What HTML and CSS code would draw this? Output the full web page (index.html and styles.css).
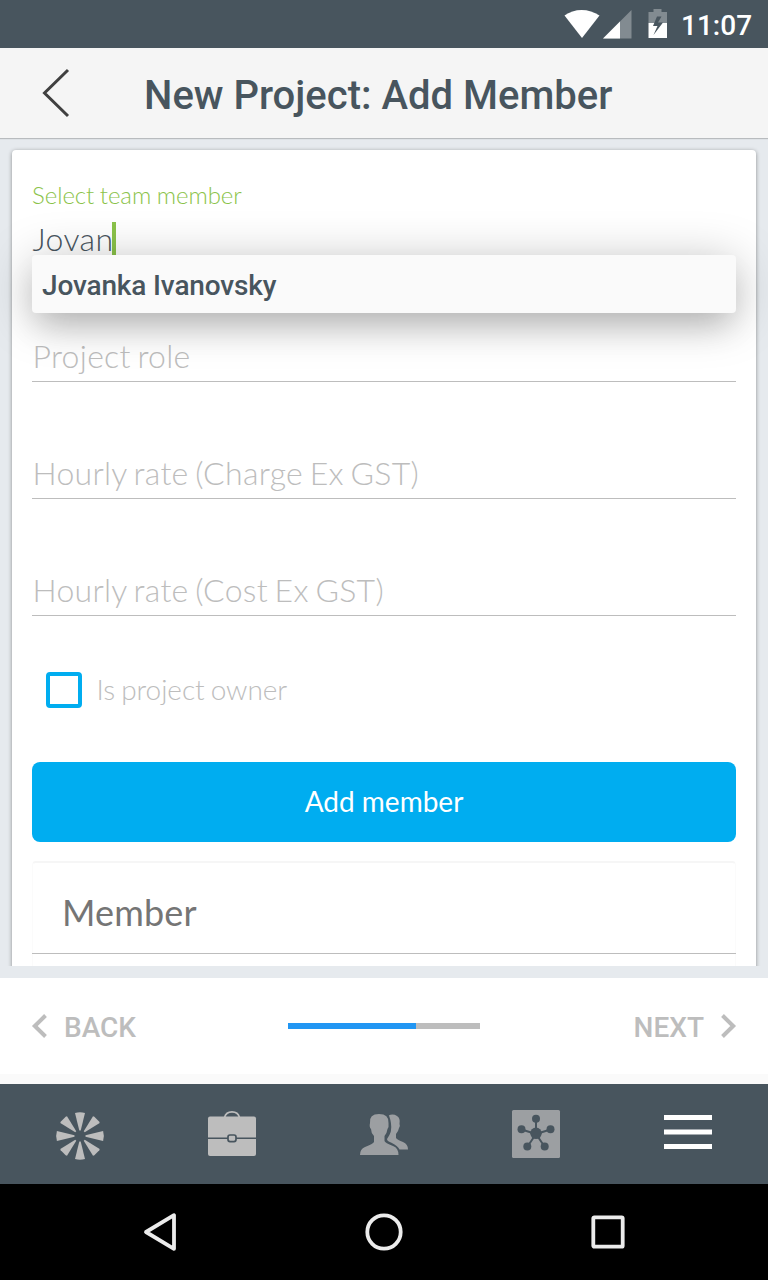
FILE: index.html
```html
<!DOCTYPE html>
<html lang="en">
<head>
<meta charset="utf-8">
<title>New Project: Add Member</title>
<link rel="stylesheet" href="styles.css">
</head>
<body>
<div class="status-bar">
  <svg width="72" height="48" viewBox="0 0 72 48">
    <path d="M.5 15.500C10 8 25 8 35.500 15.500L18 38Z" fill="#fff"/>
    <path d="M67.500 10V38.500H39Z" fill="#fff" fill-opacity=".32"/>
    <path d="M56 21.500V38.500H39Z" fill="#fff"/>
  </svg>
  <svg class="battery" width="20" height="48" viewBox="0 0 20 48">
    <path d="M0.500 12h5V9h8v3h5.500v11H.5Z" fill="#fff" fill-opacity=".32"/>
    <path d="M.5 23H19V38H.5Z" fill="#fff"/>
    <path d="M9 16.500L5 26h4.500L5.500 35L15 22.500h-5L13.500 16.500Z" fill="#48555e"/>
  </svg>
  <span class="clock">11:07</span>
</div>
<header class="header">
  <svg width="30" height="52" viewBox="0 0 30 52"><path d="M27 3L3.500 26L27 49" fill="none" stroke="#404040" stroke-width="3"/></svg>
  <h1 class="title">New Project: Add Member</h1>
</header>
<main class="content">
  <section class="card">
    <div class="field field-active">
      <label class="field-label">Select team member</label>
      <div class="field-input field-value"><span>Jovan</span><i class="caret"></i></div>
      <div class="suggestions">Jovanka Ivanovsky</div>
    </div>
    <div class="field"><div class="field-input">Project role</div></div>
    <div class="field"><div class="field-input">Hourly rate (Charge Ex GST)</div></div>
    <div class="field"><div class="field-input">Hourly rate (Cost Ex GST)</div></div>
    <div class="check-row"><span class="checkbox"></span><span class="check-label">Is project owner</span></div>
    <div class="button">Add member</div>
    <div class="table"><div class="table-head">Member</div></div>
  </section>
</main>
<div class="wizard">
  <div class="step step-back">
    <svg width="16" height="26" viewBox="0 0 16 26"><path d="M13.500 2.500L2.800 13L13.500 23.500" fill="none" stroke="#bdbdbd" stroke-width="4"/></svg>
    <span>BACK</span>
  </div>
  <div class="progress"><div class="progress-fill"></div></div>
  <div class="step step-next">
    <span>NEXT</span>
    <svg width="16" height="26" viewBox="0 0 16 26"><path d="M2.500 2.500L13.200 13L2.500 23.500" fill="none" stroke="#bdbdbd" stroke-width="4"/></svg>
  </div>
</div>
<nav class="tabs">
  <svg class="tab-low" width="48" height="48" viewBox="0 0 48 48" fill="#bdbdbd">
    <path id="blade" d="M23.300 18.500L19 .9Q24 -.6 29 .9L24.700 18.500Z"/>
    <path id="blade-diagonal" d="M23.300 18L19.300 .9L20.500 .2H27.500L28.700 .9L24.700 18Z" transform="rotate(45 24 24)"/>
    <use href="#blade" transform="rotate(90 24 24)"/><use href="#blade-diagonal" transform="rotate(90 24 24)"/>
    <use href="#blade" transform="rotate(180 24 24)"/><use href="#blade-diagonal" transform="rotate(180 24 24)"/>
    <use href="#blade" transform="rotate(270 24 24)"/><use href="#blade-diagonal" transform="rotate(270 24 24)"/>
  </svg>
  <svg class="tab-low" width="48" height="48" viewBox="0 0 48 48">
    <path d="M16.500 5.500Q18 -.2 24 -.2T31.500 5.500" fill="none" stroke="#bdbdbd" stroke-width="1.700"/>
    <rect y="4.500" width="48" height="39.500" rx="2" fill="#bdbdbd"/>
    <path d="M0 26.300H48" stroke="#48555e" stroke-width="1.500"/>
    <rect x="20" y="23" width="8" height="6.600" rx="2" fill="#bdbdbd" stroke="#48555e" stroke-width="1.700"/>
  </svg>
  <svg width="48" height="48" viewBox="0 0 48 48" fill="#9c9fa2">
    <path d="M28.500 5.500Q33 3.500 37 6Q40.500 8 39.500 14Q40.500 16 39 18Q38.500 21 36 24V28Q37.500 30 43 32Q48 34 48 39.500H39.500Q38 36 31 32.500Q27 31 27 29Q31 23 31 20Q32 14 29 5.500Z"/>
    <path d="M0 45Q0 39 5 37Q13 34 14 32V26Q11 23 11 19Q9 17 10 13Q9 4 19 4Q29 4 28.500 13Q29 17 27.500 19Q27 23 24.500 26V31Q25 33 33 36Q38.500 38 38.500 45Z" stroke="#48555e" stroke-width="1.600" paint-order="stroke"/>
  </svg>
  <svg width="48" height="48" viewBox="0 0 48 48">
    <rect width="48" height="48" rx="1.500" fill="#9c9fa2"/>
    <path d="M24 24V9M24 24L9.500 19.500M24 24L38.500 19.500M24 24L15.500 36.500M24 24L32.500 36.500" stroke="#48555e" stroke-width="2"/>
    <g fill="#48555e"><circle cx="24" cy="23.300" r="5.800"/><circle cx="24" cy="8.700" r="4"/><circle cx="9.500" cy="19.300" r="4"/><circle cx="38.500" cy="19.300" r="4"/><circle cx="15.300" cy="36.500" r="4"/><circle cx="32.700" cy="36.500" r="4"/></g>
  </svg>
  <svg width="48" height="48" viewBox="0 0 48 48"><path d="M0 7.500H48M0 22H48M0 36.500H48" stroke="#fff" stroke-width="4.800"/></svg>
</nav>
<div class="system-nav">
  <svg width="40" height="40" viewBox="0 0 40 40"><path d="M34 3.200V36.800L6 20Z" fill="none" stroke="#ececec" stroke-width="3.800" stroke-linejoin="round"/></svg>
  <svg width="40" height="40" viewBox="0 0 40 40"><circle cx="20" cy="20" r="16.700" fill="none" stroke="#ececec" stroke-width="3.800"/></svg>
  <svg width="40" height="40" viewBox="0 0 40 40"><rect x="5.300" y="5.300" width="29.400" height="29.400" rx="1" fill="none" stroke="#ececec" stroke-width="3.800"/></svg>
</div>
</body>
</html>
```
FILE: styles.css
```css
* { box-sizing: border-box; }
body { margin: 0; width: 768px; height: 1280px; overflow: hidden; display: flex; flex-direction: column; background: #e6eaee; font-family: Roboto, sans-serif; }
svg { display: block; flex: none; overflow: visible; }

.status-bar { height: 48px; flex: none; display: flex; align-items: center; justify-content: flex-end; padding-right: 16px; background: #48555e; }
.battery { margin-left: 12px; }
.clock { width: 71px; margin-left: 13px; font-size: 28px; line-height: 48px; font-weight: 500; color: #fff; white-space: nowrap; padding-top: 3px; }

.header { height: 90px; flex: none; display: flex; align-items: center; padding-left: 41px; background: #f5f5f5; box-shadow: 0 1px 1px rgba(0, 0, 0, .2); position: relative; z-index: 1; }
.title { margin: 6px 0 0 73px; font-size: 40px; line-height: 48px; font-weight: 500; color: #48555e; white-space: nowrap; }

.content { height: 828px; flex: none; padding: 12px 12px 0; overflow: hidden; font-family: Lato, sans-serif; }
.card { height: 840px; padding: 0 20px; border-radius: 4px; background: #fff; box-shadow: 0 1px 4px rgba(0, 0, 0, .4); }

.field { height: 117px; display: flex; flex-direction: column; justify-content: flex-end; font-weight: 300; }
.field-active { height: 115px; position: relative; }
.field-label { font-size: 24px; line-height: 30px; color: #8bc34a; margin-bottom: 5px; letter-spacing: -.05px; word-spacing: -1px; }
.field-input { height: 50px; flex: none; display: flex; padding-left: .5px; border-bottom: 1px solid #bdbdbd; font-size: 32px; line-height: 47px; letter-spacing: .28px; word-spacing: -2.300px; color: #bdbdbd; white-space: pre; }
.field-value { color: #48555e; letter-spacing: .4px; }
.caret { width: 4px; height: 36px; margin: 7px 0 0 -1.500px; background: #8bc34a; }
.suggestions { position: absolute; top: 105px; left: 0; right: 0; height: 58px; padding-left: 10px; border-radius: 4px; background: #fafafa; box-shadow: 0 6px 48px rgba(0, 0, 0, .25), 0 18px 32px -6px rgba(0, 0, 0, .15); font: 500 28px/62px Roboto, sans-serif; letter-spacing: -.15px; color: #48555e; }

.check-row { display: flex; align-items: center; height: 36px; margin: 56px 0 0 14px; }
.checkbox { width: 36px; height: 36px; border: 4px solid #00adf0; border-radius: 4px; }
.check-label { margin: -2px 0 0 14.500px; font-size: 28px; font-weight: 300; letter-spacing: -.05px; word-spacing: -1.500px; color: #bdbdbd; }
.button { height: 80px; margin-top: 54px; border-radius: 8px; background: #00adf0; color: #fff; font-size: 28px; line-height: 79px; text-align: center; }
.table { height: 130px; margin-top: 19px; border: 1px solid #fbfbfb; border-width: 2px 1px; border-top-color: #f6f6f6; border-radius: 4px; }
.table-head { height: 91px; margin: 0 -1px; padding-left: 30px; border-bottom: 1px solid #bdbdbd; font-size: 36px; line-height: 98px; letter-spacing: .15px; color: #757575; }

.wizard { height: 106px; flex: none; margin-top: 12px; padding: 0 32px; display: grid; grid-template-columns: 1fr 192px 1fr; align-items: center; background: #fff; border-bottom: 10px solid #fafafa; }
.step { display: flex; align-items: center; gap: 16px; font-size: 28px; font-weight: 500; line-height: 36px; color: #bdbdbd; }
.step span { margin-top: 4px; }
.step-next { justify-content: flex-end; }
.progress { height: 6px; background: #bdbdbd; }
.progress-fill { width: 128px; height: 6px; background: #2196f3; }

.tabs { height: 100px; flex: none; display: grid; grid-template-columns: repeat(5, 152px); justify-content: center; justify-items: center; align-items: start; padding: 26px 0; background: #48555e; }
.tab-low { margin-top: 2px; }
.system-nav { height: 96px; flex: none; display: grid; grid-template-columns: repeat(3, 224px); justify-content: center; justify-items: center; align-items: center; background: #000; }
```
